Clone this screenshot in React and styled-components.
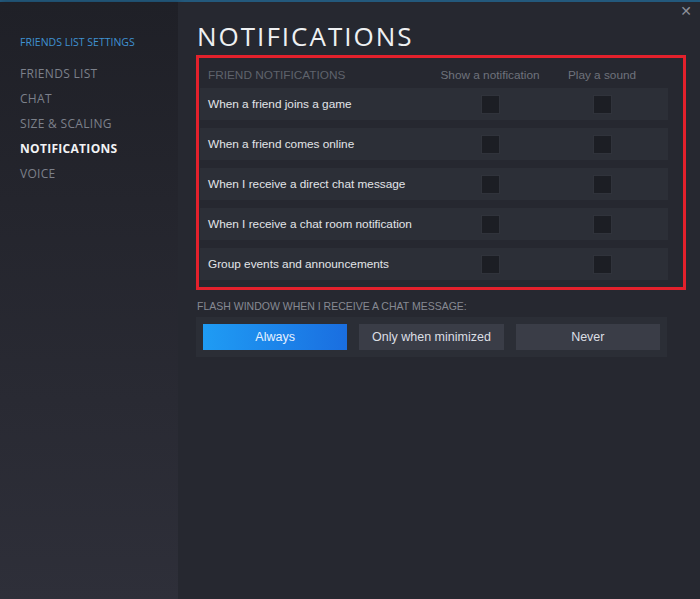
import React from 'react';
import styled, { createGlobalStyle } from 'styled-components';

const GLOBAL = createGlobalStyle`
body {
  margin: 0;
  background: #262830;
}
`;

const WINDOW = styled.div`
display: flex;
height: 599px;
box-sizing: border-box;
border-top: 2px solid #23597c;
`;

const SIDEBAR = styled.nav`
width: 178px;
flex-shrink: 0;
padding: 33px 0 0 20px;
box-sizing: border-box;
background: linear-gradient(to bottom, #1f2027, #2e2f39);
box-shadow: 2px 0 4px rgba(0, 0, 0, 0.25);
display: flex;
flex-direction: column;
font-family: "Open Sans", sans-serif;
`;

const SIDETITLE = styled.div`
color: #3f91d2;
font-size: 10.5px;
text-transform: uppercase;
margin-bottom: 12px;
`;

const NAVITEM = styled.div`
color: ${p => (p.active ? '#f2f3f5' : '#7c808a')};
font-weight: ${p => (p.active ? 700 : 400)};
font-size: 12px;
letter-spacing: 0.3px;
text-transform: uppercase;
height: 25px;
line-height: 25px;
`;

const MAIN = styled.main`
flex: 1;
position: relative;
padding: 16px 14px 0 18px;
background: #262830;
`;

const CLOSE = styled.div`
position: absolute;
top: 1px;
right: 8px;
color: #8b8f98;
font-family: "DejaVu Sans", sans-serif;
font-size: 14px;
`;

const TITLE = styled.h1`
margin: 0 0 1px 1px;
font-family: "Open Sans", sans-serif;
font-weight: 400;
font-size: 26px;
line-height: 36px;
letter-spacing: 2px;
color: #eef0f2;
`;

const HIGHLIGHT = styled.section`
border: 3px solid #e3212c;
padding: 7px 15px 7px 1px;
`;

const GRID = styled.div`
display: grid;
grid-template-columns: 1fr 112px 112px;
align-items: center;
padding: ${p => p.head ? '0 10px 3px 8px' : '0 10px 0 8px'};
height: ${p => p.head ? '20px' : '32px'};
margin-bottom: ${p => p.head ? '0' : '8px'};
background: ${p => p.head ? 'transparent' : '#2c2f37'};
font-family: "Liberation Sans", Arial, sans-serif;
font-size: 11.8px;
&:last-child { margin-bottom: 0; }
`;

const HEADLABEL = styled.div`
color: #5f636c;
text-transform: uppercase;
`;

const COLHEAD = styled.div`
color: #6f737c;
text-align: center;
`;

const LABEL = styled.div`
color: #e2e5e9;
`;

const CELL = styled.div`
display: flex;
justify-content: center;
`;

const CHECK = styled.div`
width: 17px;
height: 17px;
background: #1c1e24;
border: 1px solid #30333b;
`;

const FLASHLABEL = styled.div`
margin: 10px 0 5px 1px;
font-family: "Liberation Sans", Arial, sans-serif;
font-size: 10.5px;
color: #868a93;
text-transform: uppercase;
`;

const GROUP = styled.div`
display: grid;
grid-template-columns: repeat(3, 1fr);
gap: 12px;
padding: 7px;
width: 471px;
box-sizing: border-box;
background: #2b2e36;
`;

const OPTION = styled.div`
height: 26px;
line-height: 26px;
text-align: center;
font-family: "Liberation Sans", Arial, sans-serif;
font-size: 12.5px;
color: ${p => (p.selected ? '#e6f1ff' : '#dcdfe4')};
background: ${p => (p.selected ? 'linear-gradient(to right, #1f9cf4, #1a6ee0)' : '#3a3d47')};
`;

const nav = ['Friends List', 'Chat', 'Size & Scaling', 'Notifications', 'Voice'];
const rows = [
  'When a friend joins a game',
  'When a friend comes online',
  'When I receive a direct chat message',
  'When I receive a chat room notification',
  'Group events and announcements',
];

function App() {
  return (
    <WINDOW>
      <GLOBAL />
      <SIDEBAR>
        <SIDETITLE>Friends List Settings</SIDETITLE>
        {nav.map(n => (
          <NAVITEM key={n} active={n === 'Notifications'}>{n}</NAVITEM>
        ))}
      </SIDEBAR>
      <MAIN>
        <CLOSE>✕</CLOSE>
        <TITLE>NOTIFICATIONS</TITLE>
        <HIGHLIGHT>
          <GRID head>
            <HEADLABEL>Friend Notifications</HEADLABEL>
            <COLHEAD>Show a notification</COLHEAD>
            <COLHEAD>Play a sound</COLHEAD>
          </GRID>
          {rows.map(r => (
            <GRID key={r}>
              <LABEL>{r}</LABEL>
              <CELL><CHECK /></CELL>
              <CELL><CHECK /></CELL>
            </GRID>
          ))}
        </HIGHLIGHT>
        <FLASHLABEL>Flash window when I receive a chat message:</FLASHLABEL>
        <GROUP>
          <OPTION selected>Always</OPTION>
          <OPTION>Only when minimized</OPTION>
          <OPTION>Never</OPTION>
        </GROUP>
      </MAIN>
    </WINDOW>
  );
}

export default App;
